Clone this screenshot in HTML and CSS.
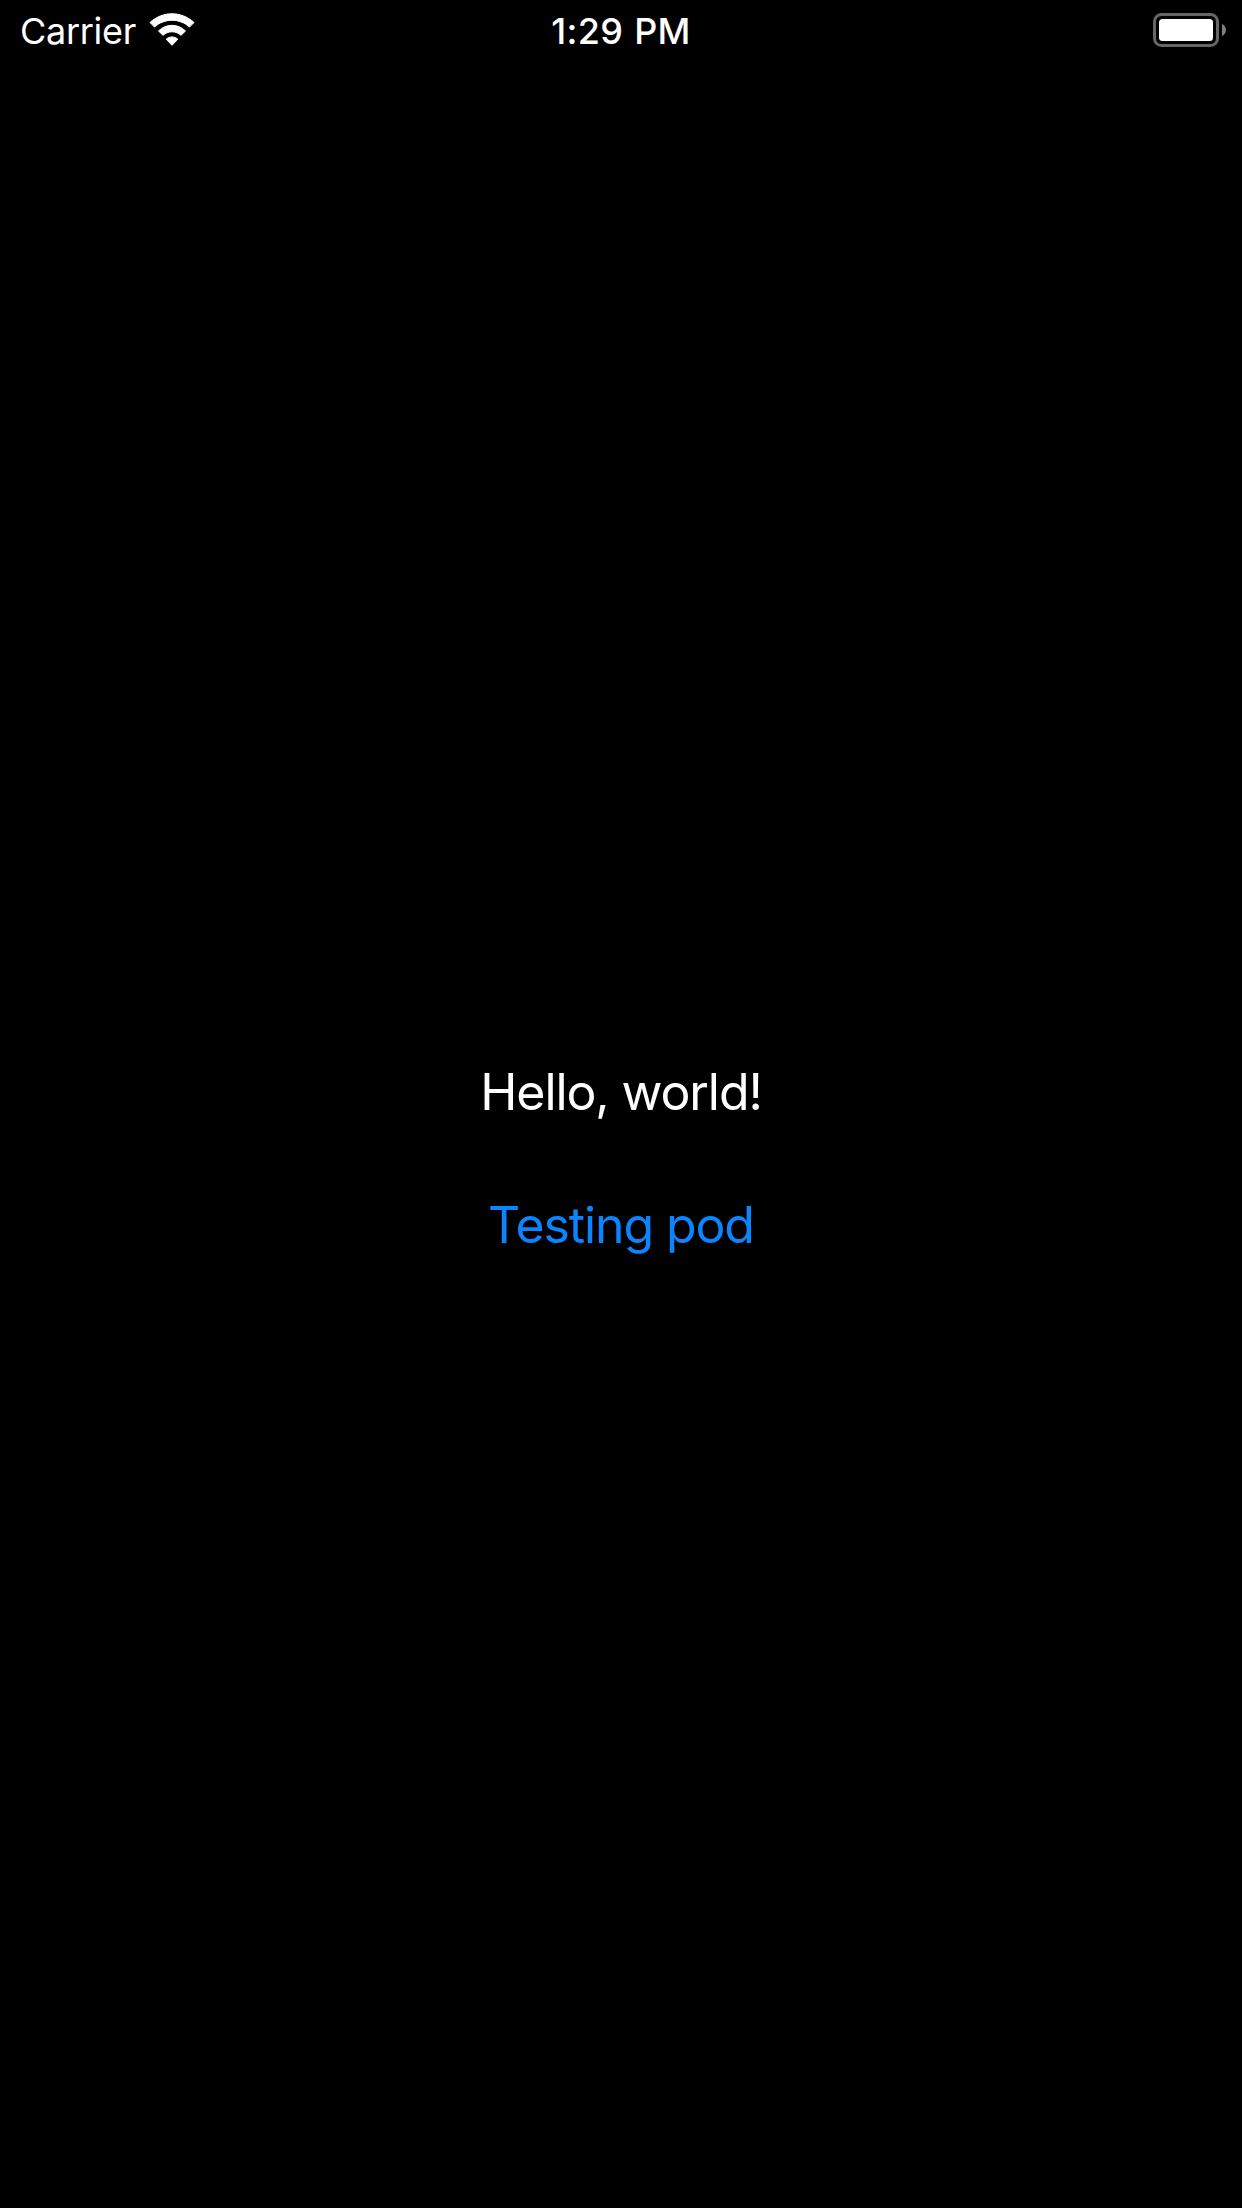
FILE: index.html
```html
<!DOCTYPE html>
<html lang="en">
<head>
<meta charset="utf-8">
<meta name="viewport" content="width=device-width">
<title>Hello, world!</title>
<link rel="stylesheet" href="styles.css">
</head>
<body>
<header class="status-bar">
  <div class="network">
    <span class="carrier">Carrier</span>
    <svg class="wifi" width="46" height="34" viewBox="0 0 46 34" fill="#fff" stroke="#fff" stroke-width="1" stroke-linejoin="round" aria-label="Wi-Fi">
      <path d="M1 9.500C13.500-2.200 32.500-2.200 45 9.500L40.500 14C30.500 5 15.500 5 5.500 14Z"/>
      <path d="M9.500 18C17 10.400 29 10.400 36.500 18L32 22.300C27 17.600 19 17.600 14 22.300Z"/>
      <path d="M17.200 26.200C20.500 23.200 25.500 23.200 28.800 26.200L23 32.300Z"/>
    </svg>
  </div>
  <time class="clock">1:29 PM</time>
  <svg class="battery" width="74" height="34" viewBox="0 0 74 34" aria-label="Battery full">
    <rect x="1.500" y="1.500" width="63" height="31" rx="7" fill="none" stroke="#666" stroke-width="3"/>
    <rect x="6" y="6" width="54" height="22" rx="3.500" fill="#fff"/>
    <path d="M69 11C74.300 13.200 74.300 20.800 69 23Z" fill="#808080"/>
  </svg>
</header>
<main class="content">
  <p class="greeting">Hello, world!</p>
  <button class="link-button" type="button">Testing pod</button>
</main>
</body>
</html>
```
FILE: styles.css
```css
body {
  margin: 0;
  min-height: 2208px;
  background: #000;
  color: #fff;
  font-family: Inter, "Liberation Sans", sans-serif;
}

.status-bar {
  display: grid;
  grid-template-columns: 1fr auto 1fr;
  height: 62px;
  padding: 0 15px;
  font-size: 36px;
  line-height: 62px;
}

.network {
  display: flex;
  gap: 13px;
  padding-left: 5px;
}

.carrier {
  letter-spacing: -0.3px;
}

.wifi {
  margin-top: 13px;
}

.clock {
  font-weight: 550;
  letter-spacing: 0.3px;
  word-spacing: 1px;
}

.battery {
  justify-self: end;
  margin-top: 13px;
}

.content {
  display: flex;
  flex-direction: column;
  align-items: center;
  gap: 72px;
  padding-top: 1000px;
  font-size: 50px;
  line-height: 61px;
  letter-spacing: -1.1px;
}

.greeting {
  margin: 0;
}

.link-button {
  padding: 0;
  border: 0;
  background: none;
  color: #0a84ff;
  font: inherit;
  letter-spacing: inherit;
}
```
